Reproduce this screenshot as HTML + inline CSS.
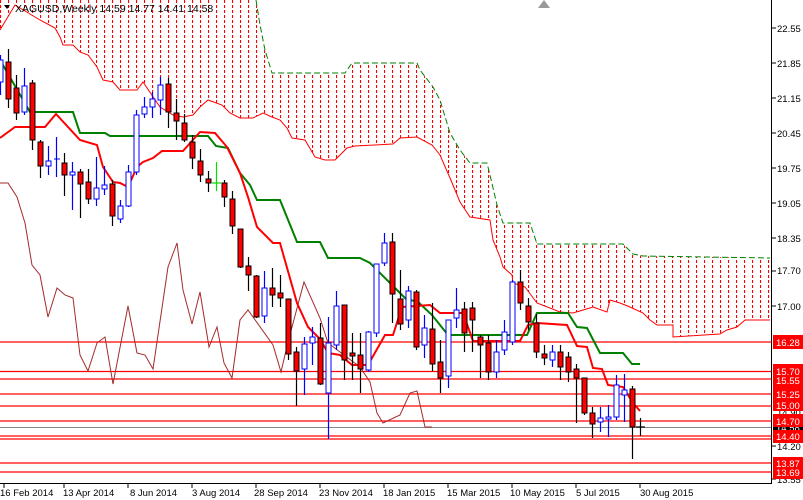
<!DOCTYPE html>
<html><head><meta charset="utf-8"><style>
html,body{margin:0;padding:0;background:#fff;}
svg{display:block;font-family:"Liberation Sans",sans-serif;}
</style></head><body>
<svg width="803" height="500" viewBox="0 0 803 500" xmlns="http://www.w3.org/2000/svg">
<defs>
<pattern id="h" x="0" y="0" width="8" height="5" patternUnits="userSpaceOnUse">
<line x1="0.5" y1="0" x2="0.5" y2="3" stroke="#ff0000" stroke-width="1.2"/>
</pattern>
</defs>
<rect width="803" height="500" fill="#fff"/>
<!-- cloud -->
<polygon fill="url(#h)" points="0,0 256,0 260,25 265,50 272,73 345,73 352,63 417,63 420,70 433,87 440,100 450,133 460,150 470,163 487,163 490,175 497,205 503,223 530,223 537,244 623,244 633,254 643,256 770,258 770,320 745,320 737,327 727,330 720,334 673,337 673,325 657,325 650,320 643,313 630,307 620,303 610,300 607,312 593,307 583,310 573,313 560,312 537,303 525,287 513,283 512,275 503,267 500,257 493,240 490,220 470,217 460,202 450,178 440,155 432,145 417,137 400,138 393,144 355,146 347,148 340,155 335,160 325,160 315,157 305,140 292,138 287,128 280,120 272,117 263,113 253,118 240,118 230,113 222,105 208,100 200,107 193,115 183,117 173,115 160,107 143,82 137,90 120,90 113,82 103,80 97,67 88,55 80,52 73,45 63,45 60,37 55,28 40,20 15,5 0,30"/>
<polyline fill="none" stroke="#ff0000" stroke-width="1" points="0,30 15,5 40,20 55,28 60,37 63,45 73,45 80,52 88,55 97,67 103,80 113,82 120,90 137,90 143,82 160,107 173,115 183,117 193,115 200,107 208,100 222,105 230,113 240,118 253,118 263,113 272,117 280,120 287,128 292,138 305,140 315,157 325,160 335,160 340,155 347,148 355,146 393,144 400,138 417,137 432,145 440,155 450,178 460,202 470,217 490,220 493,240 500,257 503,267 512,275 513,283 525,287 537,303 560,312 573,313 583,310 593,307 607,312 610,300 620,303 630,307 643,313 650,320 657,325 673,325 673,337 720,334 727,330 737,327 745,320 770,320"/>
<polyline fill="none" stroke="#008000" stroke-width="1" stroke-dasharray="6,3" points="256,0 260,25 265,50 272,73 345,73 352,63 417,63 420,70 433,87 440,100 450,133 460,150 470,163 487,163 490,175 497,205 503,223 530,223 537,244 623,244 633,254 643,256 770,258"/>
<!-- horizontal levels -->
<g stroke="#ff0000" stroke-width="1.2">
<line x1="0" y1="342" x2="772" y2="342"/><line x1="0" y1="371.5" x2="772" y2="371.5"/><line x1="0" y1="379" x2="772" y2="379"/>
<line x1="0" y1="394" x2="772" y2="394"/><line x1="0" y1="406" x2="772" y2="406"/><line x1="0" y1="421" x2="772" y2="421"/>
<line x1="0" y1="436" x2="772" y2="436"/><line x1="0" y1="439" x2="772" y2="439"/><line x1="0" y1="463" x2="772" y2="463"/><line x1="0" y1="472" x2="772" y2="472"/>
</g>
<line x1="0" y1="427.5" x2="772" y2="427.5" stroke="#888" stroke-width="1"/>
<!-- chikou -->
<polyline fill="none" stroke="#a52a2a" stroke-width="1" points="0,183 8,183 17,197 25,223 32,265 40,275 48,317 57,288 65,295 73,298 80,355 88,371 97,343 105,337 113,384 128,306 137,353 145,355 153,369 168,267 177,243 183,290 192,324 200,292 209,347 217,327 224,363 232,378 240,320 248,310 273,345 281,372 288,342 304,282 320,318 328,343 360,367 370,382 377,413 383,423 400,415 410,393 417,391 425,427 432,427"/>
<!-- kijun -->
<polyline fill="none" stroke="#008000" stroke-width="2" points="0,60 30,112 73,112 80,133 105,133 110,136 208,136 216,146 228,148 240,173 250,185 257,200 280,200 297,242 320,242 328,258 360,258 370,263 390,283 407,300 417,301 432,315 448,335 527,335 537,313 568,313 577,327 587,328 600,353 623,353 632,364 640,364"/>
<!-- tenkan -->
<polyline fill="none" stroke="#ff0000" stroke-width="2" points="0,138 15,127 45,127 56,114 80,140 97,145 103,167 113,182 120,183 128,187 137,167 143,162 153,158 162,151 183,151 200,132 215,133 227,147 240,173 248,197 257,227 273,243 280,243 297,303 308,327 320,339 328,353 340,355 352,365 368,365 385,335 393,335 402,307 430,305 440,313 463,313 473,341 520,341 528,325 537,323 567,325 577,346 587,347 593,368 602,369 608,385 623,387 633,403 640,411"/>
<!-- candles: wicks -->
<g stroke-width="1.2">
<g stroke="#0000ff">
<line x1="0.5" y1="55" x2="0.5" y2="95"/><line x1="24.5" y1="68" x2="24.5" y2="115"/><line x1="48.5" y1="146" x2="48.5" y2="175"/><line x1="56.5" y1="137" x2="56.5" y2="177"/><line x1="72.5" y1="162" x2="72.5" y2="210"/><line x1="96.5" y1="157" x2="96.5" y2="206"/><line x1="104.5" y1="166" x2="104.5" y2="195"/><line x1="120.5" y1="200" x2="120.5" y2="223"/><line x1="128.5" y1="165" x2="128.5" y2="207"/><line x1="136.5" y1="110" x2="136.5" y2="175"/><line x1="144.5" y1="97" x2="144.5" y2="118"/><line x1="152.5" y1="92" x2="152.5" y2="118"/><line x1="160.5" y1="77" x2="160.5" y2="115"/>
<line x1="264.5" y1="271" x2="264.5" y2="323"/><line x1="304.5" y1="337" x2="304.5" y2="395"/><line x1="312.5" y1="327" x2="312.5" y2="365"/><line x1="328.5" y1="317" x2="328.5" y2="439"/><line x1="336.5" y1="291" x2="336.5" y2="350"/><line x1="368.5" y1="331" x2="368.5" y2="372"/><line x1="376.5" y1="264" x2="376.5" y2="337"/><line x1="384.5" y1="233" x2="384.5" y2="266"/><line x1="408.5" y1="286" x2="408.5" y2="328"/><line x1="424.5" y1="315" x2="424.5" y2="358"/><line x1="448.5" y1="320" x2="448.5" y2="388"/><line x1="456.5" y1="288" x2="456.5" y2="328"/><line x1="496.5" y1="340" x2="496.5" y2="378"/><line x1="504.5" y1="320" x2="504.5" y2="355"/><line x1="512.5" y1="280" x2="512.5" y2="345"/><line x1="552.5" y1="345" x2="552.5" y2="367"/><line x1="600.5" y1="407" x2="600.5" y2="432"/><line x1="608.5" y1="405" x2="608.5" y2="437"/><line x1="616.5" y1="375" x2="616.5" y2="420"/><line x1="624.5" y1="374" x2="624.5" y2="422"/>
</g>
<line x1="216.5" y1="162" x2="216.5" y2="191" stroke="#00dd00"/>
<line x1="212" y1="183" x2="221" y2="183" stroke="#00dd00"/>
<g stroke="#000">
<line x1="8.5" y1="49" x2="8.5" y2="108"/><line x1="16.5" y1="75" x2="16.5" y2="120"/><line x1="32.5" y1="80" x2="32.5" y2="150"/><line x1="40.5" y1="140" x2="40.5" y2="178"/><line x1="64.5" y1="153" x2="64.5" y2="196"/><line x1="80.5" y1="169" x2="80.5" y2="218"/><line x1="88.5" y1="169" x2="88.5" y2="204"/><line x1="112.5" y1="180" x2="112.5" y2="226"/><line x1="168.5" y1="78" x2="168.5" y2="128"/><line x1="176.5" y1="99" x2="176.5" y2="140"/><line x1="184.5" y1="114" x2="184.5" y2="142"/><line x1="192.5" y1="135" x2="192.5" y2="169"/><line x1="200.5" y1="149" x2="200.5" y2="182"/><line x1="208.5" y1="171" x2="208.5" y2="192"/><line x1="224.5" y1="180" x2="224.5" y2="207"/><line x1="232.5" y1="191" x2="232.5" y2="234"/><line x1="240.5" y1="229" x2="240.5" y2="268"/><line x1="248.5" y1="257" x2="248.5" y2="291"/><line x1="256.5" y1="275" x2="256.5" y2="318"/><line x1="272.5" y1="268" x2="272.5" y2="307"/><line x1="280.5" y1="275" x2="280.5" y2="307"/><line x1="288.5" y1="299" x2="288.5" y2="360"/><line x1="296.5" y1="347" x2="296.5" y2="406"/><line x1="320.5" y1="323" x2="320.5" y2="385"/><line x1="344.5" y1="305" x2="344.5" y2="380"/><line x1="352.5" y1="333" x2="352.5" y2="380"/><line x1="360.5" y1="333" x2="360.5" y2="393"/><line x1="392.5" y1="233" x2="392.5" y2="323"/><line x1="400.5" y1="270" x2="400.5" y2="330"/><line x1="416.5" y1="290" x2="416.5" y2="350"/><line x1="432.5" y1="303" x2="432.5" y2="371"/><line x1="440.5" y1="340" x2="440.5" y2="393"/><line x1="464.5" y1="302" x2="464.5" y2="352"/><line x1="472.5" y1="302" x2="472.5" y2="352"/><line x1="480.5" y1="335" x2="480.5" y2="378"/><line x1="488.5" y1="335" x2="488.5" y2="380"/><line x1="520.5" y1="270" x2="520.5" y2="310"/><line x1="528.5" y1="298" x2="528.5" y2="330"/><line x1="536.5" y1="314" x2="536.5" y2="358"/><line x1="544.5" y1="345" x2="544.5" y2="365"/><line x1="560.5" y1="345" x2="560.5" y2="380"/><line x1="568.5" y1="352" x2="568.5" y2="382"/><line x1="576.5" y1="364" x2="576.5" y2="423"/><line x1="584.5" y1="378" x2="584.5" y2="415"/><line x1="592.5" y1="407" x2="592.5" y2="438"/><line x1="632.5" y1="386" x2="632.5" y2="459"/><line x1="640.5" y1="418" x2="640.5" y2="436"/><line x1="636" y1="427" x2="645" y2="427"/>
</g>
</g>
<!-- bodies -->
<g fill="#ff0000" stroke="#000" stroke-width="1">
<rect x="6" y="62" width="5" height="37"/><rect x="14" y="88" width="5" height="25"/><rect x="30" y="83" width="5" height="57"/><rect x="38" y="142" width="5" height="24"/><rect x="62" y="163" width="5" height="12"/><rect x="78" y="172" width="5" height="12"/><rect x="86" y="182" width="5" height="17"/><rect x="110" y="184" width="5" height="32"/><rect x="166" y="84" width="5" height="28"/><rect x="174" y="113" width="5" height="8"/><rect x="182" y="123" width="5" height="17"/><rect x="190" y="142" width="5" height="16"/><rect x="198" y="161" width="5" height="14"/><rect x="206" y="179" width="5" height="4"/><rect x="222" y="183" width="5" height="14"/><rect x="230" y="199" width="5" height="27"/><rect x="238" y="229" width="5" height="38"/><rect x="246" y="266" width="5" height="9"/><rect x="254" y="276" width="5" height="41"/><rect x="270" y="288" width="5" height="7"/><rect x="278" y="293" width="5" height="5"/><rect x="286" y="299" width="5" height="55"/><rect x="294" y="352" width="5" height="19"/><rect x="318" y="338" width="5" height="46"/><rect x="342" y="305" width="5" height="55"/><rect x="350" y="353" width="5" height="3"/><rect x="358" y="355" width="5" height="14"/><rect x="390" y="242" width="5" height="52"/><rect x="398" y="299" width="5" height="25"/><rect x="414" y="292" width="5" height="55"/><rect x="430" y="329" width="5" height="35"/><rect x="438" y="362" width="5" height="16"/><rect x="462" y="309" width="5" height="24"/><rect x="470" y="308" width="5" height="12"/><rect x="478" y="337" width="5" height="8"/><rect x="486" y="343" width="5" height="29"/><rect x="518" y="282" width="5" height="21"/><rect x="526" y="306" width="5" height="16"/><rect x="534" y="323" width="5" height="29"/><rect x="542" y="354" width="5" height="4"/><rect x="558" y="352" width="5" height="15"/><rect x="566" y="357" width="5" height="15"/><rect x="574" y="369" width="5" height="9"/><rect x="582" y="378" width="5" height="35"/><rect x="590" y="413" width="5" height="11"/><rect x="630" y="389" width="5" height="38"/>
</g>
<g fill="#fff" stroke="#0000ff" stroke-width="1">
<rect x="-2" y="60" width="5" height="22"/><rect x="22" y="86" width="5" height="26"/><rect x="46" y="161" width="5" height="5"/><rect x="70" y="172" width="5" height="3"/><rect x="94" y="188" width="5" height="11"/><rect x="102" y="185" width="5" height="4"/><rect x="118" y="206" width="5" height="13"/><rect x="126" y="172" width="5" height="34"/><rect x="134" y="115" width="5" height="57"/><rect x="142" y="107" width="5" height="7"/><rect x="150" y="99" width="5" height="8"/><rect x="158" y="85" width="5" height="15"/><rect x="262" y="288" width="5" height="28"/><rect x="302" y="344" width="5" height="25"/><rect x="310" y="337" width="5" height="6"/><rect x="326" y="343" width="5" height="50"/><rect x="334" y="306" width="5" height="39"/><rect x="366" y="332" width="5" height="38"/><rect x="374" y="264" width="5" height="69"/><rect x="382" y="243" width="5" height="20"/><rect x="406" y="291" width="5" height="29"/><rect x="422" y="328" width="5" height="17"/><rect x="446" y="320" width="5" height="56"/><rect x="454" y="310" width="5" height="8"/><rect x="494" y="352" width="5" height="20"/><rect x="502" y="332" width="5" height="18"/><rect x="510" y="282" width="5" height="60"/><rect x="550" y="352" width="5" height="8"/><rect x="598" y="418" width="5" height="4"/><rect x="606" y="417" width="5" height="2"/><rect x="614" y="385" width="5" height="32"/><rect x="622" y="390" width="5" height="5"/>
</g>
<line x1="54" y1="159" x2="60" y2="159" stroke="#0000ff"/>
<!-- axes -->
<line x1="771.5" y1="0" x2="771.5" y2="483" stroke="#000"/>
<line x1="0" y1="483.5" x2="772" y2="483.5" stroke="#000"/>
<polygon points="538,8 544,0 550,8" fill="#999"/>
<g font-size="9.5" fill="#000">
<g stroke="#000"><line x1="772" y1="28" x2="776" y2="28"/><line x1="772" y1="63" x2="776" y2="63"/><line x1="772" y1="98" x2="776" y2="98"/><line x1="772" y1="133" x2="776" y2="133"/><line x1="772" y1="168" x2="776" y2="168"/><line x1="772" y1="203" x2="776" y2="203"/><line x1="772" y1="238" x2="776" y2="238"/><line x1="772" y1="271" x2="776" y2="271"/><line x1="772" y1="306" x2="776" y2="306"/><line x1="772" y1="446" x2="776" y2="446"/><line x1="772" y1="479" x2="776" y2="479"/></g>
<text x="777" y="32">22.55</text><text x="777" y="67">21.85</text><text x="777" y="102">21.15</text><text x="777" y="137">20.45</text><text x="777" y="172">19.75</text><text x="777" y="207">19.05</text><text x="777" y="242">18.35</text><text x="777" y="274">17.70</text><text x="777" y="310">17.00</text><text x="777" y="416">14.90</text><text x="777" y="450">14.20</text><text x="777" y="483">13.55</text>
</g>
<g font-size="9.5" fill="#fff">
<rect x="773" y="335" width="30" height="14" fill="#ff0000"/><text x="776" y="346">16.28</text>
<rect x="773" y="364" width="30" height="23" fill="#ff0000"/><text x="776" y="375">15.70</text><text x="776" y="384">15.55</text>
<rect x="773" y="387" width="30" height="13" fill="#ff0000"/><text x="776" y="398">15.25</text>
<rect x="773" y="399" width="30" height="12" fill="#ff0000"/><text x="776" y="409">15.00</text>
<rect x="773" y="421" width="30" height="12" fill="#000"/><text x="776" y="431">14.58</text>
<rect x="773" y="414" width="30" height="13" fill="#ff0000"/><text x="776" y="425">14.70</text>
<rect x="773" y="430" width="30" height="13" fill="#ff0000"/><text x="776" y="440">14.40</text>
<rect x="773" y="457" width="30" height="22" fill="#ff0000"/><text x="776" y="467">13.87</text><text x="776" y="476">13.69</text>
</g>
<g stroke="#000"><line x1="4" y1="484" x2="4" y2="488"/><line x1="64" y1="484" x2="64" y2="488"/><line x1="128" y1="484" x2="128" y2="488"/><line x1="192" y1="484" x2="192" y2="488"/><line x1="256" y1="484" x2="256" y2="488"/><line x1="320" y1="484" x2="320" y2="488"/><line x1="384" y1="484" x2="384" y2="488"/><line x1="448" y1="484" x2="448" y2="488"/><line x1="512" y1="484" x2="512" y2="488"/><line x1="576" y1="484" x2="576" y2="488"/><line x1="640" y1="484" x2="640" y2="488"/></g>
<g font-size="9.5" fill="#000">
<text x="0" y="496">16 Feb 2014</text><text x="63" y="496">13 Apr 2014</text><text x="130" y="496">8 Jun 2014</text><text x="192" y="496">3 Aug 2014</text><text x="254" y="496">28 Sep 2014</text><text x="319" y="496">23 Nov 2014</text><text x="383" y="496">18 Jan 2015</text><text x="447" y="496">15 Mar 2015</text><text x="510" y="496">10 May 2015</text><text x="576" y="496">5 Jul 2015</text><text x="640" y="496">30 Aug 2015</text>
</g>
<polygon points="4,5 10,5 7,9" fill="#000"/>
<text x="15" y="12" font-size="10.5" fill="#000">XAGUSD,Weekly  14.59 14.77 14.41 14.58</text>
</svg>
</body></html>
